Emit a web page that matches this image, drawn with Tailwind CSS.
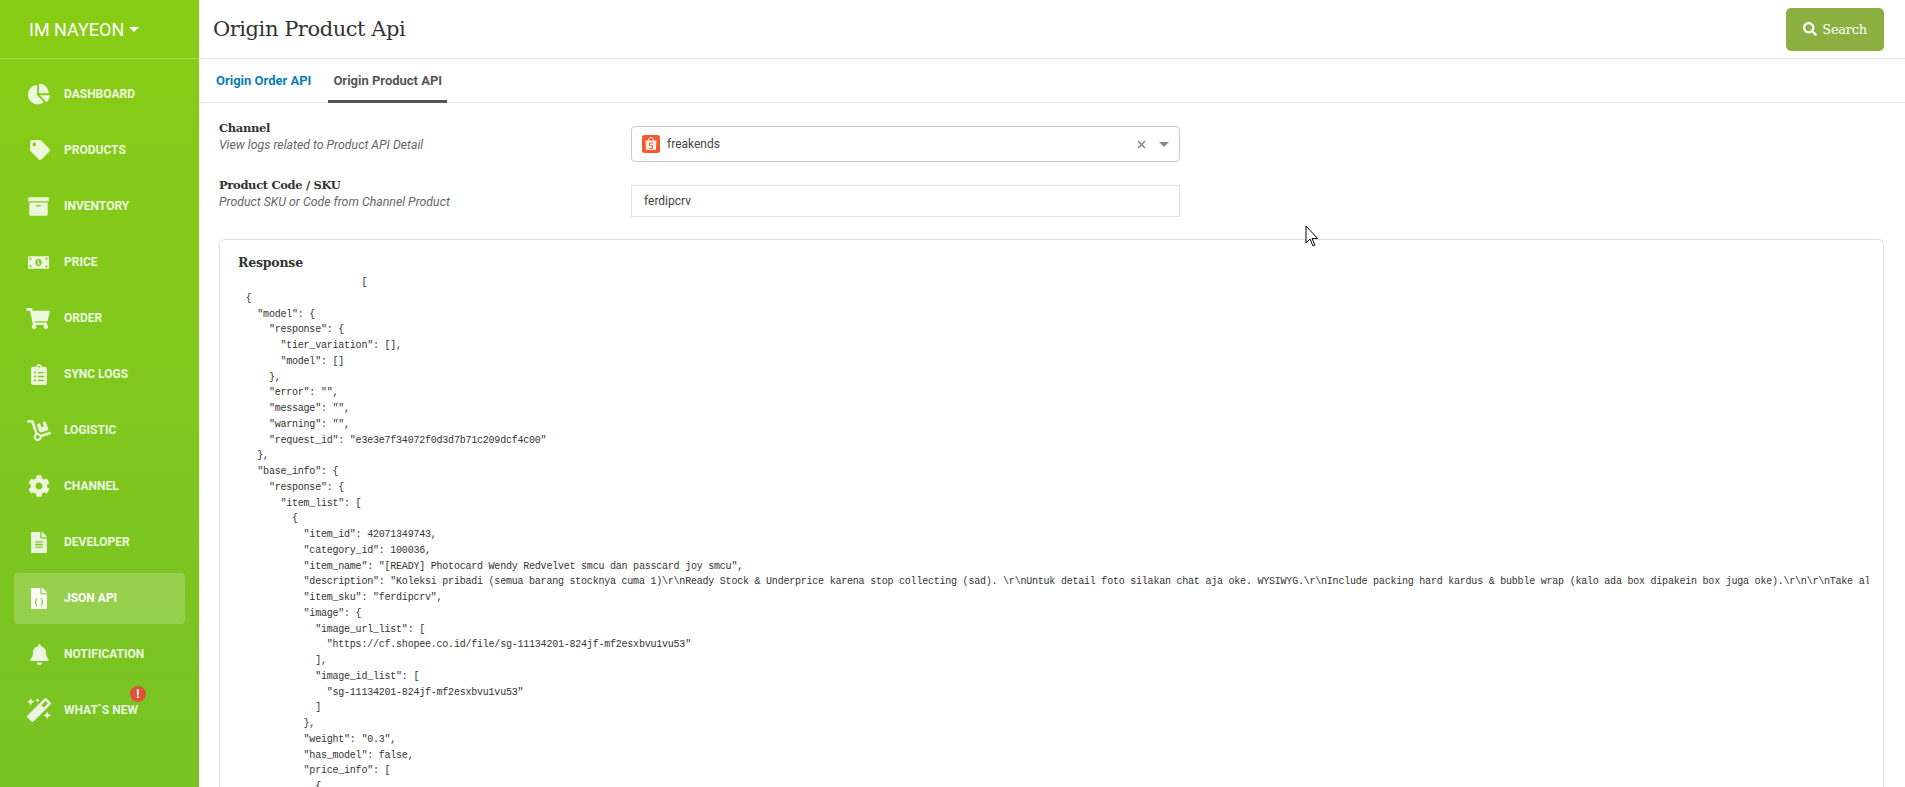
<!DOCTYPE html>
<html lang="en">

<head>
    <meta charset="UTF-8">
    <meta name="viewport" content="width=device-width, initial-scale=1.0">
    <title>Origin Product Api</title>
    <script src="https://cdn.jsdelivr.net/npm/@tailwindcss/browser@4"></script>
</head>

<body class="h-screen overflow-hidden flex bg-white font-['Roboto',sans-serif] text-[#333]">
    <!-- Sidebar -->
    <aside class="w-[199px] shrink-0 h-full bg-gradient-to-b from-[#88cc14] to-[#78c324] flex flex-col">
        <div class="h-[59px] shrink-0 border-b border-white/30 pl-[29px] flex items-center text-white text-[18px] gap-[5px]">
            IM NAYEON
            <span class="w-0 h-0 border-x-[5px] border-x-transparent border-t-[5px] border-t-white"></span>
        </div>
        <nav class="flex flex-col pt-[7px] px-[14px] text-[12px] font-bold uppercase text-white/85">
            <a class="h-[56px] flex items-center">
                <span class="w-[50px] pl-[14px] shrink-0"><svg class="w-[22px] h-[22px] fill-current" viewBox="0 0 544 512"><path d="M527.79 288H290.5l158.03 158.03c6.04 6.04 15.98 6.53 22.19.68 38.7-36.46 65.32-85.61 73.13-140.86 1.34-9.46-6.51-17.85-16.06-17.85zm-15.83-64.8C503.72 103.74 408.26 8.28 288.8.04 279.68-.59 272 7.1 272 16.24V240h223.77c9.14 0 16.82-7.68 16.19-16.8zM224 288V50.71c0-9.55-8.39-17.4-17.84-16.06C86.99 51.49-4.1 155.6.14 280.37 4.5 408.51 114.83 513.59 243.03 511.98c50.4-.63 96.97-16.87 135.26-44.03 7.9-5.6 8.42-17.23 1.57-24.08L224 288z"/></svg></span>
                Dashboard
            </a>
            <a class="h-[56px] flex items-center">
                <span class="w-[50px] pl-[16px] shrink-0"><svg class="w-[20px] h-[20px] fill-current" viewBox="0 0 512 512"><path d="M0 252.118V48C0 21.49 21.49 0 48 0h204.118a48 48 0 0 1 33.941 14.059l211.882 211.882c18.745 18.745 18.745 49.137 0 67.882L293.823 497.941c-18.745 18.745-49.137 18.745-67.882 0L14.059 286.059A48 48 0 0 1 0 252.118zM112 64c-26.51 0-48 21.49-48 48s21.49 48 48 48 48-21.49 48-48-21.49-48-48-48z"/></svg></span>
                Products
            </a>
            <a class="h-[56px] flex items-center">
                <span class="w-[50px] pl-[14px] shrink-0"><svg class="w-[21px] h-[21px] fill-current" viewBox="0 0 512 512"><path d="M32 448c0 17.7 14.3 32 32 32h384c17.7 0 32-14.3 32-32V160H32v288zm160-212c0-6.6 5.4-12 12-12h104c6.6 0 12 5.4 12 12v8c0 6.6-5.4 12-12 12H204c-6.6 0-12-5.4-12-12v-8zM480 32H32C14.3 32 0 46.3 0 64v48c0 8.8 7.2 16 16 16h480c8.8 0 16-7.2 16-16V64c0-17.7-14.3-32-32-32z"/></svg></span>
                Inventory
            </a>
            <a class="h-[56px] flex items-center">
                <span class="w-[50px] pl-[14px] shrink-0"><svg class="w-[21px] h-[21px] fill-current" viewBox="0 0 640 512"><path d="M352 288h-16v-88c0-4.42-3.58-8-8-8h-13.58c-4.74 0-9.37 1.4-13.31 4.03l-15.33 10.22a7.99 7.99 0 0 0-2.22 11.09l8.88 13.31a7.99 7.99 0 0 0 11.09 2.22l.47-.31V288h-16c-4.42 0-8 3.58-8 8v16c0 4.42 3.58 8 8 8h64c4.42 0 8-3.58 8-8v-16c0-4.42-3.58-8-8-8zM608 64H32C14.33 64 0 78.33 0 96v320c0 17.67 14.33 32 32 32h576c17.67 0 32-14.33 32-32V96c0-17.67-14.33-32-32-32zM48 400v-64c35.35 0 64 28.65 64 64H48zm0-224v-64h64c0 35.35-28.65 64-64 64zm272 192c-53 0-96-50.15-96-112 0-61.86 43-112 96-112s96 50.14 96 112c0 61.87-43.02 112-96 112zm272 32h-64c0-35.35 28.65-64 64-64v64zm0-224c-35.35 0-64-28.65-64-64h64v64z"/></svg></span>
                Price
            </a>
            <a class="h-[56px] flex items-center">
                <span class="w-[50px] pl-[12px] shrink-0"><svg class="w-[24px] h-[21px] fill-current" viewBox="0 0 576 512"><path d="M528.12 301.319l47.273-208C578.806 78.301 567.391 64 551.99 64H159.208l-9.166-44.81C147.758 8.021 137.93 0 126.529 0H24C10.745 0 0 10.745 0 24v16c0 13.255 10.745 24 24 24h69.883l70.248 343.435C147.325 417.1 136 435.222 136 456c0 30.928 25.072 56 56 56s56-25.072 56-56c0-15.674-6.447-29.835-16.824-40h209.647C430.447 426.165 424 440.326 424 456c0 30.928 25.072 56 56 56s56-25.072 56-56c0-22.172-12.888-41.332-31.579-50.405l5.517-24.276c3.413-15.018-8.002-29.319-23.403-29.319H218.117l-6.545-32h293.145c11.206 0 20.92-7.754 23.403-18.681z"/></svg></span>
                Order
            </a>
            <a class="h-[56px] flex items-center">
                <span class="w-[50px] pl-[17px] shrink-0"><svg class="w-[16px] h-[21px] fill-current" viewBox="0 0 384 512"><path d="M336 64h-80c0-35.3-28.7-64-64-64s-64 28.7-64 64H48C21.5 64 0 85.5 0 112v352c0 26.5 21.5 48 48 48h288c26.5 0 48-21.5 48-48V112c0-26.5-21.5-48-48-48zM96 424c-13.3 0-24-10.7-24-24s10.7-24 24-24 24 10.7 24 24-10.7 24-24 24zm0-96c-13.3 0-24-10.7-24-24s10.7-24 24-24 24 10.7 24 24-10.7 24-24 24zm0-96c-13.3 0-24-10.7-24-24s10.7-24 24-24 24 10.7 24 24-10.7 24-24 24zm96-192c13.3 0 24 10.7 24 24s-10.7 24-24 24-24-10.7-24-24 10.7-24 24-24zm128 368c0 4.4-3.6 8-8 8H168c-4.4 0-8-3.6-8-8v-16c0-4.4 3.6-8 8-8h144c4.4 0 8 3.6 8 8v16zm0-96c0 4.4-3.6 8-8 8H168c-4.4 0-8-3.6-8-8v-16c0-4.4 3.6-8 8-8h144c4.4 0 8 3.6 8 8v16zm0-96c0 4.4-3.6 8-8 8H168c-4.4 0-8-3.6-8-8v-16c0-4.4 3.6-8 8-8h144c4.4 0 8 3.6 8 8v16z"/></svg></span>
                Sync Logs
            </a>
            <a class="h-[56px] flex items-center">
                <span class="w-[50px] pl-[13px] shrink-0"><svg class="w-[24px] h-[21px] fill-current" viewBox="0 0 576 512"><path d="M294.2 277.7c18 5 34.7 13.4 49.5 24.7l161.5-53.8c8.4-2.8 12.9-11.9 10.1-20.2L454.9 47.2c-2.8-8.4-11.9-12.9-20.2-10.1l-61.1 20.4 33.1 99.4L346 177l-33.1-99.4-61.6 20.5c-8.4 2.8-12.9 11.9-10.1 20.2l53 159.4zm281 48.7L565 296c-2.8-8.4-11.9-12.9-20.2-10.1l-213.5 71.2c-17.2-22-43.6-36.4-73.5-37L158.4 21.9C154 8.8 141.8 0 128 0H16C7.2 0 0 7.2 0 16v32c0 8.8 7.2 16 16 16h88.9l92.2 276.7c-26.1 20.4-41.7 53.6-36 90.5 6.1 39.4 37.9 72.3 77.3 79.2 60.2 10.7 112.3-34.8 113.4-92.6l213.3-71.2c8.3-2.8 12.9-11.8 10.1-20.2zM256 464c-26.5 0-48-21.5-48-48s21.5-48 48-48 48 21.5 48 48-21.5 48-48 48z"/></svg></span>
                Logistic
            </a>
            <a class="h-[56px] flex items-center">
                <span class="w-[50px] pl-[14px] shrink-0"><svg class="w-[22px] h-[22px] fill-current" viewBox="0 0 512 512"><path d="M487.4 315.7l-42.6-24.6c4.3-23.2 4.3-47 0-70.2l42.6-24.6c4.9-2.8 7.1-8.6 5.5-14-11.1-35.6-30-67.8-54.7-94.6-3.8-4.1-10-5.1-14.8-2.3L380.8 110c-17.9-15.4-38.5-27.3-60.8-35.1V25.8c0-5.6-3.9-10.5-9.4-11.7-36.7-8.2-74.3-7.8-109.2 0-5.5 1.2-9.4 6.1-9.4 11.7V75c-22.2 7.9-42.8 19.8-60.8 35.1L88.7 85.5c-4.9-2.8-11-1.9-14.8 2.3-24.7 26.7-43.6 58.9-54.7 94.6-1.7 5.4.6 11.2 5.5 14L67.3 221c-4.3 23.2-4.3 47 0 70.2l-42.6 24.6c-4.9 2.8-7.1 8.6-5.5 14 11.1 35.6 30 67.8 54.7 94.6 3.8 4.1 10 5.1 14.8 2.3l42.6-24.6c17.9 15.4 38.5 27.3 60.8 35.1v49.2c0 5.6 3.9 10.5 9.4 11.7 36.7 8.2 74.3 7.8 109.2 0 5.5-1.2 9.4-6.1 9.4-11.7v-49.2c22.2-7.9 42.8-19.8 60.8-35.1l42.6 24.6c4.9 2.8 11 1.9 14.8-2.3 24.7-26.7 43.6-58.9 54.7-94.6 1.5-5.5-.7-11.3-5.6-14.1zM256 336c-44.1 0-80-35.9-80-80s35.9-80 80-80 80 35.9 80 80-35.9 80-80 80z"/></svg></span>
                Channel
            </a>
            <a class="h-[56px] flex items-center">
                <span class="w-[50px] pl-[17px] shrink-0"><svg class="w-[16px] h-[21px] fill-current" viewBox="0 0 384 512"><path d="M224 136V0H24C10.7 0 0 10.7 0 24v464c0 13.3 10.7 24 24 24h336c13.3 0 24-10.7 24-24V160H248c-13.2 0-24-10.8-24-24zm64 236c0 6.6-5.4 12-12 12H108c-6.6 0-12-5.4-12-12v-8c0-6.6 5.4-12 12-12h168c6.6 0 12 5.4 12 12v8zm0-64c0 6.6-5.4 12-12 12H108c-6.6 0-12-5.4-12-12v-8c0-6.6 5.4-12 12-12h168c6.6 0 12 5.4 12 12v8zm0-72v8c0 6.6-5.4 12-12 12H108c-6.6 0-12-5.4-12-12v-8c0-6.6 5.4-12 12-12h168c6.6 0 12 5.4 12 12zm96-114.1v6.1H256V0h6.1c6.4 0 12.5 2.5 17 7l97.9 98c4.5 4.5 7 10.6 7 16.9z"/></svg></span>
                Developer
            </a>
            <a class="h-[51px] my-[2.5px] flex items-center rounded-[4px] bg-white/20 text-white">
                <span class="w-[50px] pl-[17px] shrink-0"><svg class="w-[16px] h-[21px]" viewBox="0 0 384 512"><path class="fill-white" d="M384 121.941V128H256V0h6.059c6.365 0 12.47 2.529 16.971 7.029l97.941 97.941A24.005 24.005 0 0 1 384 121.941zM248 160c-13.2 0-24-10.8-24-24V0H24C10.745 0 0 10.745 0 24v464c0 13.255 10.745 24 24 24h336c13.255 0 24-10.745 24-24V160H248z"/><path class="fill-none stroke-[#7fc51f]" stroke-width="28" d="M150 250c-30 0-30 10-30 50 0 30-5 40-30 45 25 5 30 15 30 45 0 40 0 50 30 50M234 250c30 0 30 10 30 50 0 30 5 40 30 45-25 5-30 15-30 45 0 40 0 50-30 50"/></svg></span>
                JSON API
            </a>
            <a class="h-[56px] flex items-center">
                <span class="w-[50px] pl-[16px] shrink-0"><svg class="w-[19px] h-[21px] fill-current" viewBox="0 0 448 512"><path d="M224 512c35.32 0 63.97-28.65 63.97-64H160.03c0 35.35 28.65 64 63.97 64zm215.39-149.71c-19.32-20.76-55.47-51.99-55.47-154.29 0-77.7-54.48-139.9-127.94-155.16V32c0-17.67-14.32-32-31.98-32s-31.98 14.33-31.98 32v20.84C118.56 68.1 64.08 130.3 64.08 208c0 102.3-36.15 133.53-55.47 154.29-6 6.45-8.66 14.16-8.61 21.71.11 16.4 12.98 32 32.1 32h383.8c19.12 0 32-15.6 32.1-32 .05-7.55-2.61-15.27-8.61-21.71z"/></svg></span>
                Notification
            </a>
            <a class="h-[56px] flex items-center">
                <span class="w-[50px] pl-[13px] shrink-0"><svg class="w-[24px] h-[24px] fill-current" viewBox="0 0 512 512"><path d="M224 96l16-32 32-16-32-16-16-32-16 32-32 16 32 16 16 32zM80 160l26.66-53.33L160 80l-53.34-26.67L80 0 53.34 53.33 0 80l53.34 26.67L80 160zm352 128l-26.66 53.33L352 368l53.34 26.67L432 448l26.66-53.33L512 368l-53.34-26.67L432 288zm70.62-193.77L417.77 9.38C411.53 3.12 403.34 0 395.15 0c-8.19 0-16.38 3.12-22.63 9.38L9.38 372.52c-12.5 12.5-12.5 32.76 0 45.25l84.85 84.85c6.25 6.25 14.44 9.37 22.62 9.37 8.19 0 16.38-3.12 22.63-9.37l363.14-363.15c12.5-12.48 12.5-32.75 0-45.24zM359.45 203.46l-50.91-50.91 86.6-86.6 50.91 50.91-86.6 86.6z"/></svg></span>
                <span class="relative">What`s New
                    <span class="absolute -top-[15px] right-[-8px] w-4 h-4 rounded-full bg-[#e0523a] text-white text-[12px] font-bold flex items-center justify-center">!</span>
                </span>
            </a>
        </nav>
    </aside>

    <!-- Main -->
    <main class="flex-1 min-w-0 flex flex-col">
        <header class="h-[59px] shrink-0 border-b border-[#e5e5e5] flex items-center justify-between pl-[14px] pr-[21px]">
            <h1 class="font-['DejaVu_Serif',serif] text-[21px] tracking-[-0.45px] pt-[1px] text-[#333]">Origin Product Api</h1>
            <button class="w-[98px] h-[43px] rounded-[5px] bg-[#8bb03f] text-white font-['DejaVu_Serif',serif] text-[13px] tracking-[-0.3px] flex items-center justify-center gap-[5px]">
                <svg class="w-[14px] h-[14px] fill-current" viewBox="0 0 512 512"><path d="M505 442.7L405.3 343c-4.5-4.5-10.6-7-17-7H372c27.6-35.3 44-79.7 44-128C416 93.1 322.9 0 208 0S0 93.1 0 208s93.1 208 208 208c48.3 0 92.7-16.4 128-44v16.3c0 6.4 2.5 12.5 7 17l99.7 99.7c9.4 9.4 24.6 9.4 33.9 0l28.3-28.3c9.4-9.4 9.4-24.6.1-34zM208 336c-70.7 0-128-57.2-128-128 0-70.7 57.2-128 128-128 70.7 0 128 57.2 128 128 0 70.7-57.2 128-128 128z"/></svg>
                <span class="pt-[2px]">Search</span>
            </button>
        </header>

        <div class="h-[44px] shrink-0 border-b border-[#e5e5e5] flex pl-[10px] text-[13px] font-bold">
            <a class="px-[7px] h-[44px] flex items-center text-[#0a7cba]">Origin Order API</a>
            <a class="ml-[10px] px-[5px] h-[44px] flex items-center text-[#555] border-b-[3px] border-[#555] pt-[3px]">Origin Product API</a>
        </div>

        <section class="pl-[20px] pr-[21px] pt-[12px] flex-1 min-h-0 flex flex-col">
            <div class="flex h-[62px]">
                <div class="w-[412px] shrink-0">
                    <div class="font-['DejaVu_Serif',serif] font-bold text-[11.5px] tracking-[-0.33px] leading-[16px] mt-[5px] text-[#333]">Channel</div>
                    <div class="italic text-[12.3px] leading-[16px] mt-[1px] text-[#666]">View logs related to Product API Detail</div>
                </div>
                <div class="w-[549px] h-[36px] mt-[11px] border border-[#ccc] rounded-[4px] flex items-center pl-[10px] pr-[10px] text-[12px] text-[#444]">
                    <svg class="w-[18px] h-[18px] mr-[7px]" viewBox="0 0 18 18"><rect width="18" height="18" rx="2.500" fill="#f4592d"/><path d="M3.500 5.500h11l-.6 9.500H4.100z" fill="#fff" opacity=".9"/><path d="M6.500 5.500c0-4 5-4 5 0" fill="none" stroke="#fff"/><path d="M11 8H7.500v2.800H10.500v2.800H7" fill="none" stroke="#f4592d"/></svg>
                    <span>freakends</span>
                    <svg class="ml-auto w-[9px] h-[9px]" viewBox="0 0 9 9"><path d="M1 1l7 7M8 1L1 8" stroke="#888" stroke-width="1.600"/></svg>
                    <span class="ml-[13px] w-0 h-0 border-x-[5px] border-x-transparent border-t-[5px] border-t-[#888]"></span>
                </div>
            </div>
            <div class="flex h-[62px]">
                <div class="w-[412px] shrink-0">
                    <div class="font-['DejaVu_Serif',serif] font-bold text-[11.5px] tracking-[-0.33px] leading-[16px] text-[#333]">Product Code / SKU</div>
                    <div class="italic text-[12.3px] leading-[16px] mt-[1px] text-[#666]">Product SKU or Code from Channel Product</div>
                </div>
                <input type="text" value="ferdipcrv" class="w-[549px] h-[32px] mt-[8px] border border-[#dfe1e6] px-[12px] text-[12px] text-[#444]">
            </div>

            <div class="flex-1 min-h-0 border border-[#ddd] border-b-0 rounded-t-[6px] pl-[18px] pr-[14px] pt-[14px] overflow-hidden">
                <h2 class="font-['DejaVu_Serif',serif] font-bold text-[12.5px] tracking-[-0.2px] leading-[18px] text-[#333]">Response</h2>
                <pre class="font-['Liberation_Mono',monospace] text-[10px] tracking-[-0.22px] leading-[15.75px] text-[#333] overflow-hidden mt-[3px] pl-[2px]">                     [
 {
   "model": {
     "response": {
       "tier_variation": [],
       "model": []
     },
     "error": "",
     "message": "",
     "warning": "",
     "request_id": "e3e3e7f34072f0d3d7b71c209dcf4c00"
   },
   "base_info": {
     "response": {
       "item_list": [
         {
           "item_id": 42071349743,
           "category_id": 100036,
           "item_name": "[READY] Photocard Wendy Redvelvet smcu dan passcard joy smcu",
           "description": "Koleksi pribadi (semua barang stocknya cuma 1)\r\nReady Stock &amp; Underprice karena stop collecting (sad). \r\nUntuk detail foto silakan chat aja oke. WYSIWYG.\r\nInclude packing hard kardus &amp; bubble wrap (kalo ada box dipakein box juga oke).\r\n\r\nTake all",
           "item_sku": "ferdipcrv",
           "image": {
             "image_url_list": [
               "https://cf.shopee.co.id/file/sg-11134201-824jf-mf2esxbvu1vu53"
             ],
             "image_id_list": [
               "sg-11134201-824jf-mf2esxbvu1vu53"
             ]
           },
           "weight": "0.3",
           "has_model": false,
           "price_info": [
             {</pre>
            </div>
        </section>
    </main>

    <!-- Mouse pointer from the capture -->
    <svg class="absolute left-[1305px] top-[225px] w-[14px] h-[22px]" viewBox="0 0 14 22"><path d="M1 1v17l4-4 3 7 2-1-3-6.500h5.500z" fill="#fff" stroke="#000" stroke-width="1"/></svg>
</body>
</html>
